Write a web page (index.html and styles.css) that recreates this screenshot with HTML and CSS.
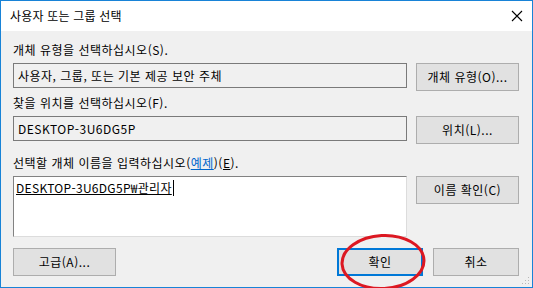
FILE: index.html
```html
<!DOCTYPE html>
<html lang="ko">
<head>
    <meta charset="UTF-8">
    <title>사용자 또는 그룹 선택</title>
    <link rel="stylesheet" href="styles.css">
</head>
<body>
    <div class="dialog">
        <div class="titlebar">
            <span class="title">사용자 또는 그룹 선택</span>
            <svg class="close" width="12" height="12" viewBox="0 0 12 12">
                <path d="M1 1 L11 11 M11 1 L1 11" stroke="#000" stroke-width="1.1" fill="none"/>
            </svg>
        </div>
        <div class="content">
            <div class="label">개체 유형을 선택하십시오(S).</div>
            <div class="row first">
                <div class="field">사용자, 그룹, 또는 기본 제공 보안 주체</div>
                <div class="button">개체 유형(O)...</div>
            </div>
            <div class="label">찾을 위치를 선택하십시오(F).</div>
            <div class="row second">
                <div class="field">DESKTOP-3U6DG5P</div>
                <div class="button">위치(L)...</div>
            </div>
            <div class="label">선택할 개체 이름을 입력하십시오(<span class="link">예제</span>)(<u>E</u>).</div>
            <div class="row">
                <div class="names"><span class="entry">DESKTOP-3U6DG5P₩관리자</span><span class="caret"></span></div>
                <div class="button">이름 확인(C)</div>
            </div>
            <div class="footer">
                <div class="button wide">고급(A)...</div>
                <div class="spacer"></div>
                <div class="button default">확인</div>
                <div class="button cancel">취소</div>
            </div>
        </div>
        <svg class="grip" width="8" height="8" viewBox="0 0 8 8">
            <rect x="6" y="0" width="1" height="1" fill="#b8b8b8"/>
            <rect x="3" y="3" width="1" height="1" fill="#b8b8b8"/>
            <rect x="6" y="3" width="1" height="1" fill="#b8b8b8"/>
            <rect x="0" y="6" width="1" height="1" fill="#b8b8b8"/>
            <rect x="3" y="6" width="1" height="1" fill="#b8b8b8"/>
            <rect x="6" y="6" width="1" height="1" fill="#b8b8b8"/>
        </svg>
        <svg class="mark" width="92" height="60" viewBox="0 0 92 60">
            <ellipse cx="46" cy="30" rx="41" ry="26.5" fill="none" stroke="#dc1822" stroke-width="3" transform="rotate(-3 46 30)"/>
        </svg>
    </div>
</body>
</html>
```

FILE: styles.css
```css
body {
    margin: 0;
    font-family: "Noto Sans CJK KR", sans-serif;
    font-size: 12px;
    letter-spacing: 0.5px;
    color: #000;
}
.dialog {
    position: relative;
    width: 533px;
    height: 288px;
    box-sizing: border-box;
    border: 1px solid #1883d7;
    background-color: #f0f0f0;
}
.titlebar {
    height: 30px;
    background-color: #fff;
    display: flex;
    align-items: center;
    justify-content: space-between;
    padding: 0 9px 0 9px;
}
.title {
    font-size: 12px;
    letter-spacing: 0.2px;
    line-height: 16px;
}
.content {
    padding: 11px 13px 0 12px;
}
.label {
    height: 16px;
    line-height: 16px;
    margin-bottom: 5px;
}
.row {
    display: grid;
    grid-template-columns: 394px 103px;
    column-gap: 9px;
    align-items: start;
}
.row.first {
    margin-bottom: 4px;
}
.row.second {
    margin-bottom: 11px;
}
.field {
    height: 25px;
    box-sizing: border-box;
    border: 1px solid #7a7a7a;
    padding: 0 4px;
    line-height: 23px;
}
.names {
    height: 61px;
    box-sizing: border-box;
    background-color: #fff;
    border: 1px solid #dcdcdc;
    border-top-color: #828282;
    border-left-color: #828282;
    padding: 3px 2px;
    line-height: 16px;
    letter-spacing: 0.3px;
}
.entry {
    text-decoration: underline;
}
.caret {
    display: inline-block;
    width: 1px;
    height: 16px;
    background-color: #000;
    vertical-align: top;
    margin-left: 1px;
}
.link {
    color: #0066cc;
    text-decoration: underline;
}
.button {
    height: 28px;
    box-sizing: border-box;
    background-color: #e1e1e1;
    border: 1px solid #adadad;
    text-align: center;
    line-height: 26px;
}
.footer {
    display: flex;
    margin-top: 11px;
}
.wide {
    width: 103px;
}
.spacer {
    flex: 1;
}
.default {
    width: 86px;
    border: 2px solid #0078d7;
    line-height: 24px;
    margin-right: 10px;
}
.cancel {
    width: 86px;
}
.grip {
    position: absolute;
    right: 2px;
    bottom: 2px;
}
.mark {
    position: absolute;
    left: 336px;
    top: 231px;
}
```
